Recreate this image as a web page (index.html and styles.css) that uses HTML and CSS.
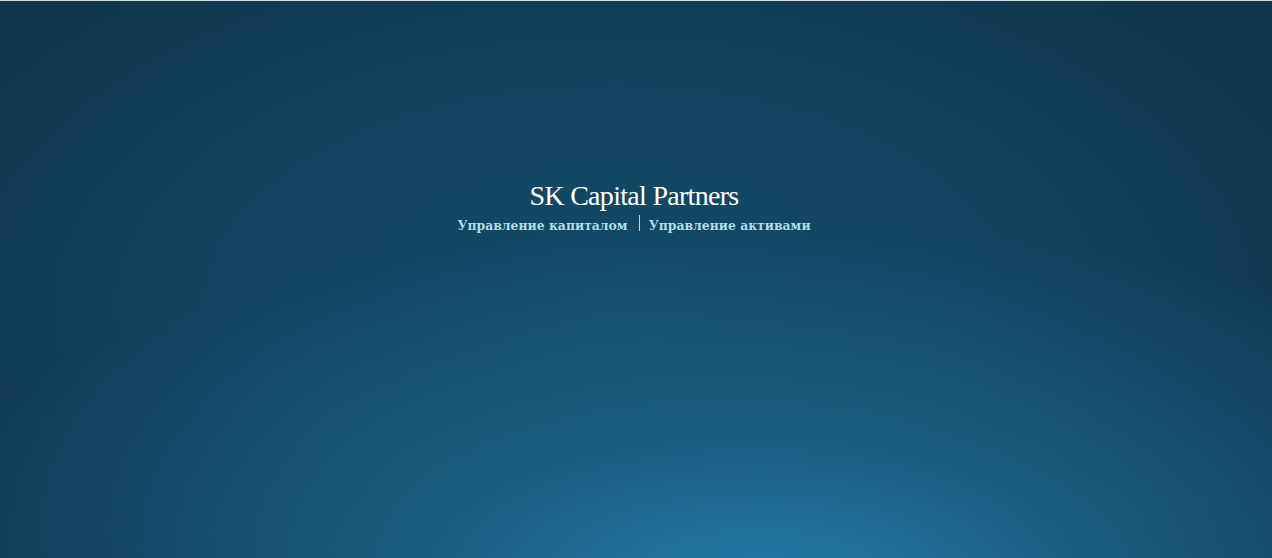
FILE: index.html
```html
<!DOCTYPE html>
<html lang="ru">
<head>
<meta charset="utf-8">
<title>SK Capital Partners</title>
<link rel="stylesheet" href="styles.css">
</head>
<body>
<div class="page">
  <header class="brand">
    <h1 class="title">SK Capital Partners</h1>
    <nav class="links">
      <span class="link">Управление капиталом</span>
      <span class="sep"></span>
      <span class="link">Управление активами</span>
    </nav>
  </header>
</div>
</body>
</html>
```
FILE: styles.css
```css
html, body {
  margin: 0;
  padding: 0;
  height: 100%;
}
body {
  border-top: 1px solid #d8dcdf;
  box-sizing: border-box;
  background: #0f3348;
}
.page {
  height: 557px;
  display: flex;
  flex-direction: column;
  align-items: center;
  padding-top: 177px;
  padding-right: 4px;
  box-sizing: border-box;
  background:
    radial-gradient(ellipse 70% 65% at 60% 105%, rgba(36, 124, 168, 1) 0%, rgba(30, 102, 142, 0.65) 45%, rgba(20, 70, 100, 0) 100%),
    radial-gradient(ellipse 60% 75% at 48% 55%, #134a68 0%, #124560 45%, #0f364d 100%);
}
.brand {
  display: flex;
  flex-direction: column;
  align-items: center;
}
.title {
  margin: 0;
  font-family: "Liberation Serif", "Times New Roman", serif;
  font-weight: normal;
  font-size: 28px;
  letter-spacing: -0.7px;
  line-height: 36px;
  color: #ffffff;
}
.links {
  display: flex;
  align-items: center;
  margin-top: 3px;
}
.link {
  font-family: "DejaVu Serif", serif;
  font-weight: bold;
  font-size: 12.4px;
  line-height: 18px;
  color: #b4dde6;
}
.sep {
  width: 1px;
  height: 16px;
  background: #b4dde6;
  margin: -6px 9px 0 11px;
}
```
